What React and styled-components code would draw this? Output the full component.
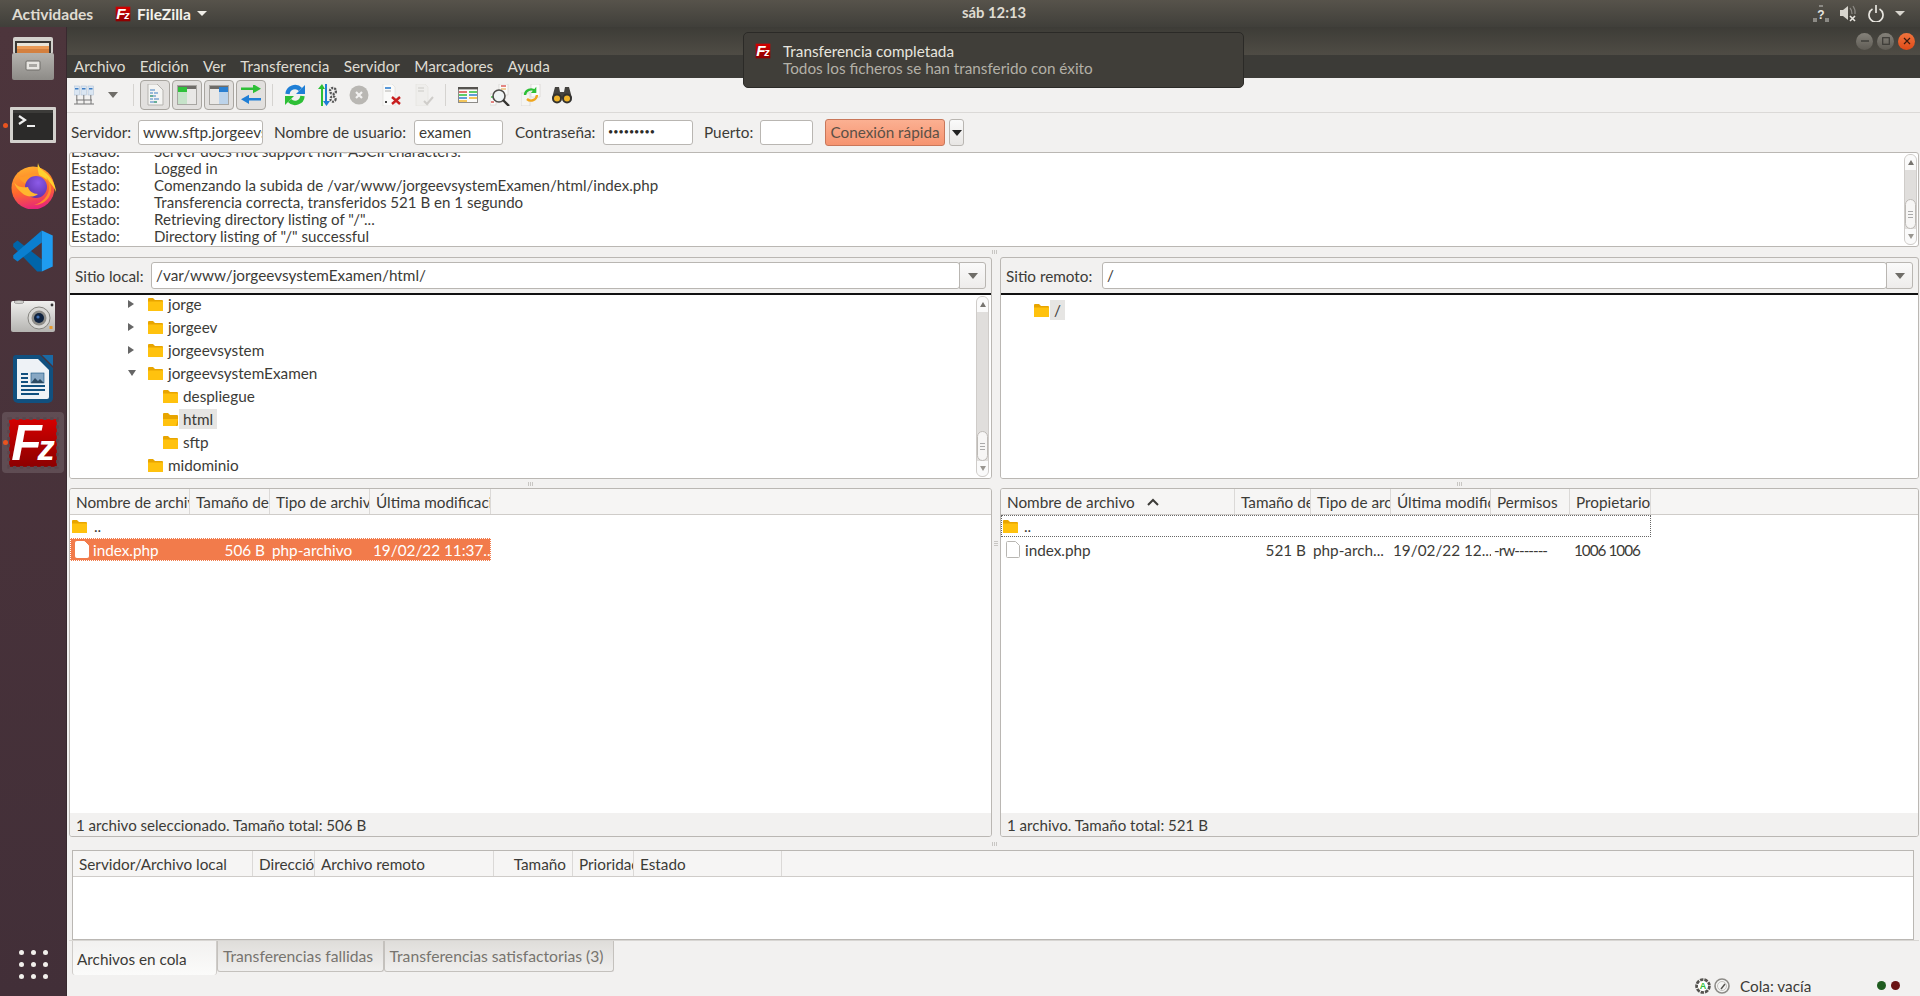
import React from 'react';
import styled, { createGlobalStyle } from 'styled-components';

const GlobalStyle = createGlobalStyle`
  html, body { margin: 0; padding: 0; background: #f2f1f0; overflow: hidden; }
  * { box-sizing: border-box; }
`;

const UI_FONT = `"Lato", "Noto Sans", sans-serif`;

const Screen = styled.div`
  width: 1920px;
  height: 996px;
  display: flex;
  flex-direction: column;
  position: relative;
  overflow: hidden;
  font-family: ${UI_FONT};
  font-size: 15.3px;
  color: #3c3b37;
`;

const TopBar = styled.div`
  height: 27px;
  flex: none;
  display: flex;
  align-items: center;
  padding: 0 15px 0 12px;
  background: linear-gradient(#57534b, #403f3a);
  color: #dfdbd2;
  font-weight: 700;
  font-size: 15.6px;
`;

const Activities = styled.span`
  width: 103px;
`;

const AppMenu = styled.span`
  display: flex;
  align-items: center;
  gap: 6px;
  color: #f4f2ec;
`;

const Caret = styled.span`
  width: 0;
  height: 0;
  border-left: 5px solid transparent;
  border-right: 5px solid transparent;
  border-top: 5px solid ${(p) => p.$color || '#f0eee8'};
  margin-left: ${(p) => p.$left || 0}px;
`;

const Clock = styled.span`
  position: absolute;
  left: 962px;
  top: 3px;
  font-size: 14.8px;
  color: #dfdbd2;
`;

const TrayIcons = styled.div`
  margin-left: auto;
  display: flex;
  align-items: center;
  gap: 11px;
`;

const Main = styled.div`
  flex: 1;
  display: flex;
  min-height: 0;
`;

const Dock = styled.div`
  width: 67px;
  flex: none;
  display: flex;
  flex-direction: column;
  align-items: center;
  background: linear-gradient(#4d353c, #422f38);
  border-right: 1px solid #38292f;
`;

const DockItem = styled.div`
  position: relative;
  width: 62px;
  height: ${(p) => p.$h}px;
  margin-top: ${(p) => p.$top}px;
  flex: none;
  display: flex;
  align-items: center;
  justify-content: center;
  border-radius: 4px;
  background: ${(p) => (p.$active ? 'rgba(255,255,255,0.13)' : 'transparent')};
`;

const RunDot = styled.span`
  position: absolute;
  left: 1px;
  top: 50%;
  margin-top: -2.5px;
  width: 5px;
  height: 5px;
  border-radius: 50%;
  background: #e95420;
`;

const AppsGrid = styled.div`
  margin-top: auto;
  margin-bottom: 17px;
  display: grid;
  grid-template-columns: repeat(3, 5px);
  gap: 7px;
`;

const AppsDot = styled.span`
  width: 5px;
  height: 5px;
  border-radius: 50%;
  background: #f2f0ec;
`;

const Window = styled.div`
  flex: 1;
  min-width: 0;
  display: flex;
  flex-direction: column;
  background: #f2f1f0;
`;

const TitleBar = styled.div`
  height: 28px;
  flex: none;
  display: flex;
  align-items: center;
  justify-content: flex-end;
  gap: 4px;
  padding-right: 5px;
  background: linear-gradient(#3d3c37, #4f4c45);
`;

const WinButton = styled.span`
  width: 17px;
  height: 17px;
  border-radius: 50%;
  display: flex;
  align-items: center;
  justify-content: center;
  background: ${(p) => (p.$close ? 'linear-gradient(#f0743e, #df4a17)' : 'linear-gradient(#85827a, #5e5b54)')};
`;

const MenuBar = styled.div`
  height: 23px;
  flex: none;
  display: flex;
  align-items: center;
  gap: 14.3px;
  padding: 0 0 2px 7px;
  background: #3c3b37;
  color: #dfdbd2;
`;

const Toolbar = styled.div`
  height: 35px;
  flex: none;
  display: flex;
  align-items: center;
  padding-left: 7px;
  border-bottom: 1px solid #dbd9d7;
`;

const ToolSlot = styled.span`
  width: ${(p) => p.$w}px;
  margin-left: ${(p) => p.$left || 0}px;
  flex: none;
  display: flex;
  align-items: center;
  justify-content: center;
`;

const ToolToggle = styled.span`
  width: 30px;
  height: 30px;
  flex: none;
  margin-left: ${(p) => p.$left || 0}px;
  display: flex;
  align-items: center;
  justify-content: center;
  border: 1px solid #a8a5a0;
  border-radius: 4px;
  background: #e2e0de;
`;

const ToolSep = styled.span`
  width: 1px;
  height: 22px;
  flex: none;
  margin-left: ${(p) => p.$left}px;
  background: #d5d3d0;
`;

const QuickBar = styled.div`
  height: 39px;
  flex: none;
  display: flex;
  align-items: center;
  padding-left: 4px;
`;

const QuickLabel = styled.span`
  margin-left: ${(p) => p.$left || 0}px;
  width: ${(p) => p.$w}px;
  padding-bottom: 2px;
  flex: none;
  white-space: nowrap;
`;

const Field = styled.div`
  width: ${(p) => p.$w}px;
  flex: ${(p) => (p.$w ? 'none' : 1)};
  min-width: 0;
  height: ${(p) => p.$h || 25}px;
  padding: 0 4px 2px;
  display: flex;
  align-items: center;
  overflow: hidden;
  white-space: nowrap;
  background: #fff;
  border: 1px solid #b9b6b2;
  border-radius: 3px;
`;

const PasswordDots = styled.span`
  font-size: 9px;
  color: #2c2b28;
`;

const ConnectButton = styled.span`
  width: 120px;
  height: 27px;
  margin-left: 12px;
  padding-bottom: 2px;
  flex: none;
  display: flex;
  align-items: center;
  justify-content: center;
  border: 1px solid #c9775a;
  border-radius: 3px;
  background: linear-gradient(#fbb092, #f69470);
  color: #5c5046;
`;

const ConnectMenu = styled.span`
  width: 15px;
  height: 27px;
  margin-left: 4px;
  flex: none;
  display: flex;
  align-items: center;
  justify-content: center;
  border: 1px solid #b9b6b2;
  border-radius: 3px;
  background: linear-gradient(#fafafa, #e8e6e4);
`;

const Content = styled.div`
  flex: 1;
  min-height: 0;
  display: flex;
  flex-direction: column;
  padding: 0 1px 0 2px;
`;

const LogBox = styled.div`
  height: 95px;
  flex: none;
  position: relative;
  display: flex;
  flex-direction: column;
  justify-content: flex-end;
  overflow: hidden;
  padding: 0 0 2px 1px;
  font-size: 15.1px;
  background: #fff;
  border: 1px solid #bab7b3;
  border-radius: 3px;
`;

const LogLine = styled.div`
  height: 17px;
  flex: none;
  display: flex;
  align-items: center;
  white-space: nowrap;
`;

const LogLabel = styled.span`
  width: 83px;
  flex: none;
`;

const Scroll = styled.div`
  position: absolute;
  top: 1px;
  right: ${(p) => p.$right || 1}px;
  bottom: 1px;
  width: 13px;
  display: flex;
  flex-direction: column;
  align-items: center;
  border: 1px solid #cfccc9;
  border-radius: 6px;
  background: #e0dedc;
  overflow: hidden;
`;

const ScrollCap = styled.span`
  height: 15px;
  width: 100%;
  flex: none;
  display: flex;
  align-items: center;
  justify-content: center;
  background: #fafafa;
`;

const ScrollGap = styled.span`
  flex: ${(p) => p.$grow};
`;

const ScrollThumb = styled.span`
  height: ${(p) => p.$h}px;
  width: 100%;
  flex: none;
  display: flex;
  flex-direction: column;
  align-items: center;
  justify-content: center;
  gap: 2px;
  background: #f7f6f5;
  border: 1px solid #bdbab6;
  border-radius: 6px;
`;

const ThumbLine = styled.span`
  width: 5px;
  height: 1px;
  background: #aaa;
`;

const ArrowMark = styled.span`
  width: 0;
  height: 0;
  border-left: 3.5px solid transparent;
  border-right: 3.5px solid transparent;
  ${(p) => (p.$up ? 'border-bottom: 5px solid #77746f;' : 'border-top: 5px solid #9a9791;')}
`;

const HGrip = styled.div`
  height: ${(p) => p.$h}px;
  flex: none;
  display: flex;
  align-items: center;
  justify-content: center;
  gap: 1px;
`;

const GripLine = styled.span`
  width: 1px;
  height: 4px;
  background: #c8c6c3;
`;

const Panes = styled.div`
  height: 580px;
  flex: none;
  display: grid;
  grid-template-columns: 923px 8px 1fr;
`;

const PaneColumn = styled.div`
  display: flex;
  flex-direction: column;
  min-width: 0;
`;

const VGrip = styled.div`
  display: flex;
  flex-direction: column;
  align-items: center;
  gap: 1px;
  padding-top: 284px;
`;

const VGripLine = styled.span`
  width: 4px;
  height: 1px;
  background: #c8c6c3;
`;

const SitePanel = styled.div`
  height: 222px;
  flex: none;
  position: relative;
  display: flex;
  flex-direction: column;
  border: 1px solid #bab7b3;
  border-radius: 3px;
  overflow: hidden;
`;

const SiteRow = styled.div`
  height: 37px;
  flex: none;
  display: flex;
  align-items: center;
  padding: 0 5px;
  border-bottom: 2px solid #111;
`;

const SiteLabel = styled.span`
  width: ${(p) => p.$w}px;
  flex: none;
  white-space: nowrap;
`;

const ComboArrow = styled.span`
  width: 27px;
  height: 27px;
  flex: none;
  margin-left: -1px;
  display: flex;
  align-items: center;
  justify-content: center;
  border: 1px solid #b9b6b2;
  border-radius: 0 3px 3px 0;
  background: linear-gradient(#fafafa, #eeeceb);
`;

const TreeArea = styled.div`
  flex: 1;
  position: relative;
  background: #fff;
  overflow: hidden;
`;

const TreeList = styled.div`
  margin-top: ${(p) => p.$top}px;
`;

const TreeRow = styled.div`
  height: 23px;
  display: flex;
  align-items: center;
  padding-left: ${(p) => p.$indent}px;
`;

const TreeToggle = styled.span`
  width: 20px;
  flex: none;
  display: flex;
  align-items: center;
`;

const Expander = styled.span`
  width: 0;
  height: 0;
  ${(p) =>
    p.$open
      ? 'border-left: 4.5px solid transparent; border-right: 4.5px solid transparent; border-top: 6px solid #666;'
      : 'border-top: 4.5px solid transparent; border-bottom: 4.5px solid transparent; border-left: 6px solid #666;'}
`;

const TreeName = styled.span`
  margin-left: 1px;
  padding: 1px 4px;
  background: ${(p) => (p.$current ? '#e6e5e3' : 'transparent')};
`;

const ListPanel = styled.div`
  flex: 1;
  min-height: 0;
  display: flex;
  flex-direction: column;
  border: 1px solid #bab7b3;
  border-radius: 3px;
  overflow: hidden;
`;

const HeaderRow = styled.div`
  height: 26px;
  flex: none;
  display: flex;
  background: #f6f5f4;
  border-bottom: 1px solid #cfccc9;
`;

const HeaderCell = styled.div`
  width: ${(p) => p.$w}px;
  flex: none;
  padding: 0 ${(p) => (p.$right ? 6 : 0)}px 0 6px;
  display: flex;
  align-items: center;
  justify-content: ${(p) => (p.$right ? 'flex-end' : 'flex-start')};
  gap: 12px;
  white-space: nowrap;
  overflow: hidden;
  border-right: 1px solid #dbd9d7;
`;

const ListBody = styled.div`
  flex: 1;
  min-height: 0;
  background: #fff;
`;

const FileRow = styled.div`
  height: ${(p) => p.$h || 23}px;
  margin-bottom: ${(p) => (p.$h ? 1 : 0)}px;
  width: ${(p) => p.$w}px;
  display: flex;
  align-items: center;
  white-space: nowrap;
  background: ${(p) => (p.$selected ? '#f27b4b' : 'transparent')};
  color: ${(p) => (p.$selected ? '#fff' : 'inherit')};
  outline: ${(p) => (p.$selected ? '1px dotted #fff' : p.$focus ? '1px dotted #666' : 'none')};
  outline-offset: -1px;
`;

const FileCell = styled.span`
  width: ${(p) => p.$w}px;
  flex: none;
  display: flex;
  align-items: center;
  gap: ${(p) => p.$gap || 0}px;
  padding: 0 ${(p) => (p.$right ? 5 : 0)}px 0 ${(p) => p.$pad || 0}px;
  justify-content: ${(p) => (p.$right ? 'flex-end' : 'flex-start')};
  letter-spacing: ${(p) => (p.$tight ? '-1px' : 'normal')};
  overflow: hidden;
`;

const PanelStatus = styled.div`
  height: 23px;
  flex: none;
  display: flex;
  align-items: center;
  padding-left: 6px;
  font-size: 15.1px;
  background: #f2f1f0;
`;

const QueueBox = styled.div`
  height: 90px;
  flex: none;
  margin: 0 5px 0 3px;
  display: flex;
  flex-direction: column;
  background: #fff;
  border: 1px solid #bab7b3;
`;

const TabStrip = styled.div`
  height: 35px;
  flex: none;
  display: flex;
  align-items: flex-start;
  padding-left: 3px;
  border-top: 1px solid #d8d6d3;
`;

const ActiveTab = styled.div`
  width: 145px;
  height: 34px;
  flex: none;
  display: flex;
  align-items: center;
  padding: 1px 0 0 4px;
  background: linear-gradient(#f2f1f0, #fbfbfa);
  border: 1px solid #cfccc9;
  border-top: none;
  border-bottom: none;
  border-radius: 0 0 3px 3px;
`;

const Tab = styled.div`
  width: ${(p) => p.$w}px;
  height: 31px;
  flex: none;
  display: flex;
  align-items: center;
  justify-content: center;
  padding-right: 5px;
  font-size: 15.7px;
  white-space: nowrap;
  color: #77746f;
  background: linear-gradient(#dfddda, #f0efee);
  border: 1px solid #c4c1bd;
  border-top: none;
  border-radius: 0 0 3px 3px;
`;

const StatusBar = styled.div`
  flex: 1;
  display: flex;
  align-items: center;
  gap: 3px;
  padding-left: 1626px;
  background: #f2f1f0;
`;

const QueueText = styled.span`
  margin-left: 7px;
  width: 134px;
`;

const Led = styled.span`
  width: 9px;
  height: 9px;
  flex: none;
  margin-right: 2px;
  border-radius: 50%;
  background: ${(p) => p.$color};
`;

const Toast = styled.div`
  position: absolute;
  left: 743px;
  top: 32px;
  width: 501px;
  height: 56px;
  display: flex;
  align-items: flex-start;
  gap: 12px;
  padding: 10px 11px;
  background: #403e39;
  border: 1px solid #2b2a27;
  border-radius: 5px;
  line-height: 17px;
`;

const ToastText = styled.div`
  color: #e7e5df;
`;

const ToastSub = styled.div`
  color: #b3b0a7;
`;

// logo: red stamp with the letters kept as text
const FzLogo = ({ size, stamp }) => (
  <svg width={size} height={size} viewBox="0 0 48 48">
    <rect x="2" y="2" width="44" height="44" fill="url(#fzShade)" />
    {stamp && (
      <rect x="1.5" y="1.5" width="45" height="45" fill="none" stroke="#5a454b" strokeWidth="2.4" strokeDasharray="3 3.4" />
    )}
    <defs>
      <linearGradient id="fzShade" x1="0" y1="0" x2="0" y2="1">
        <stop offset="0" stopColor="#d40000" />
        <stop offset="1" stopColor="#8c0000" />
      </linearGradient>
    </defs>
    <text x="24" y="40" textAnchor="middle" fontFamily="Liberation Sans, sans-serif" fontWeight="700" fontStyle="italic" fill="#fff">
      <tspan fontSize="46">F</tspan>
      <tspan fontSize="32" dx="-4">z</tspan>
    </text>
  </svg>
);

const FileCabinet = () => (
  <svg width="42" height="43" viewBox="0 0 42 43">
    <defs>
      <linearGradient id="cab" x1="0" y1="0" x2="0" y2="1">
        <stop offset="0" stopColor="#b5b3af" />
        <stop offset="1" stopColor="#8d8b87" />
      </linearGradient>
    </defs>
    <rect x="1" y="0" width="40" height="17" rx="2" fill="#d2d0cc" />
    <rect x="3" y="4" width="36" height="12" fill="#3a3734" />
    <rect x="5" y="6" width="32" height="3" fill="#e9e4d8" />
    <rect x="5" y="9" width="32" height="3" fill="#ea9a55" />
    <rect x="5" y="12" width="32" height="4" fill="#d4803f" />
    <rect x="0" y="16" width="42" height="27" rx="2" fill="url(#cab)" />
    <rect x="14" y="24" width="14" height="9" rx="1" fill="#e8e6e2" stroke="#6f6d69" />
    <rect x="17" y="27" width="8" height="3" fill="#a9a7a3" />
  </svg>
);

const TerminalIcon = () => (
  <svg width="46" height="36" viewBox="0 0 46 36">
    <rect width="46" height="36" rx="1" fill="#d3d1cd" />
    <rect x="3" y="3" width="40" height="30" fill="#2b2a29" />
    <rect x="3" y="3" width="40" height="3" fill="#3c3b39" />
    <path d="M9 9l6 4-6 4" fill="none" stroke="#eee" strokeWidth="2.2" />
    <rect x="17" y="18" width="8" height="2" fill="#eee" />
  </svg>
);

const FirefoxIcon = () => (
  <svg width="46" height="46" viewBox="0 0 46 46">
    <defs>
      <linearGradient id="ffBody" x1="0.3" y1="0" x2="0.5" y2="1">
        <stop offset="0" stopColor="#ffb02e" />
        <stop offset="0.55" stopColor="#ff6a2c" />
        <stop offset="1" stopColor="#e5227d" />
      </linearGradient>
      <radialGradient id="ffGlobe" cx="0.6" cy="0.3" r="0.8">
        <stop offset="0" stopColor="#8c5be8" />
        <stop offset="1" stopColor="#5a2ea6" />
      </radialGradient>
    </defs>
    <circle cx="23" cy="25" r="21.5" fill="url(#ffBody)" />
    <path d="M28 0c1 6 6 8 10 12 5 5 8 12 8 17-3-8-10-14-17-17-1-4-2-8-1-12z" fill="#ffd12e" />
    <path d="M7 9c1 3 3 5 6 5 4-3 9-4 14-3-3 3-7 7-8 11-5-1-11-6-12-13z" fill="#ff9a28" />
    <circle cx="26" cy="24" r="11" fill="url(#ffGlobe)" />
    <path d="M4 19c3 5 9 6 14 5 1 4 5 7 10 7-5 4-12 3-16-1-4-3-7-7-8-11z" fill="#ffb62e" />
    <path d="M36 14c5 5 7 13 3 20-3 5-9 8-15 8 8-2 15-9 15-17 0-4-1-8-3-11z" fill="#ff8d2c" />
  </svg>
);

const VsCodeIcon = () => (
  <svg width="42" height="42" viewBox="0 0 100 100">
    <polygon points="71,99 71,70 13,25 3,33 3,40 60,99" fill="#0065a9" />
    <polygon points="71,1 71,30 13,75 3,67 3,60" fill="#0a7fd0" />
    <polygon points="71,1 97,13 97,87 71,99" fill="#1f9cf0" />
  </svg>
);

const CameraIcon = () => (
  <svg width="44" height="32" viewBox="0 0 44 32">
    <defs>
      <linearGradient id="camBody" x1="0" y1="0" x2="0" y2="1">
        <stop offset="0" stopColor="#efefed" />
        <stop offset="1" stopColor="#b5b4b1" />
      </linearGradient>
    </defs>
    <rect y="1" width="44" height="31" rx="2" fill="url(#camBody)" />
    <ellipse cx="8" cy="2" rx="5" ry="1.6" fill="#d5d4d1" stroke="#777" strokeWidth="0.6" />
    <circle cx="28" cy="18" r="11" fill="#d9d8d5" stroke="#85847f" />
    <circle cx="28" cy="18" r="7.5" fill="#8e8d89" />
    <circle cx="28" cy="18" r="5" fill="#10233f" />
    <circle cx="27" cy="17" r="1.6" fill="#3f6fb2" />
    <circle cx="41" cy="5" r="1.4" fill="#333" />
    <rect x="38.5" y="26" width="3" height="3" fill="#e89a2c" />
  </svg>
);

const WriterIcon = () => (
  <svg width="40" height="48" viewBox="0 0 40 48">
    <path d="M3 0h24l13 13v30a5 5 0 0 1-5 5H5a5 5 0 0 1-5-5V3a3 3 0 0 1 3-3z" fill="#11507f" />
    <path d="M29 0h11v11z" fill="#1a6aa5" />
    <path d="M4 4h21l11 11v27a2 2 0 0 1-2 2H4z" fill="#eef2f6" />
    <rect x="8" y="18" width="7" height="2" fill="#11507f" />
    <rect x="8" y="22" width="7" height="2" fill="#11507f" />
    <rect x="8" y="26" width="7" height="2" fill="#11507f" />
    <rect x="18" y="18" width="13" height="10" fill="#88a8c4" stroke="#11507f" strokeWidth="0.6" />
    <path d="M18 28l4-5 3 3 2-2 4 4z" fill="#2b4a63" />
    <rect x="8" y="30" width="24" height="2" fill="#11507f" />
    <rect x="8" y="34" width="24" height="2" fill="#11507f" />
    <rect x="8" y="38" width="18" height="2" fill="#11507f" />
  </svg>
);

const Folder = ({ open }) => (
  <svg width="15" height="14" viewBox="0 0 15 14" style={{ flex: 'none' }}>
    <path d="M0 2a1 1 0 0 1 1-1h4l2 2h7a1 1 0 0 1 1 1v9a1 1 0 0 1-1 1H1a1 1 0 0 1-1-1z" fill="#e8a500" />
    <path d={open ? 'M0 7h15l-2 7H0z' : 'M0 4.5h15V13a1 1 0 0 1-1 1H1a1 1 0 0 1-1-1z'} fill="#ffc20e" />
  </svg>
);

const FileIcon = ({ outline }) => (
  <svg width="14" height="17" viewBox="0 0 14 17" style={{ flex: 'none' }}>
    <path d="M1.5.5h8l4 4v11a1 1 0 0 1-1 1h-11a1 1 0 0 1-1-1v-14a1 1 0 0 1 1-1z" fill="#fff" stroke={outline ? '#b8b6b2' : '#fff'} />
  </svg>
);

const SiteManagerIcon = () => (
  <svg width="20" height="20" viewBox="0 0 20 20">
    {[0, 7, 14].map((x) => (
      <g key={x}>
        <rect x={x} y="1" width="5.5" height="9" fill="#dbe6f2" stroke="#a9bdd2" strokeWidth="0.5" />
        <rect x={x + 1} y="3" width="3.5" height="1.5" fill="#3f7ec4" />
        <path d={`M${x + 2.8} 10v5`} stroke="#777" strokeWidth="1" />
      </g>
    ))}
    <path d="M2 15h16M0 19h20M3 15v4M10 15v4M17 15v4" stroke="#777" strokeWidth="1" fill="none" />
  </svg>
);

const DownArrow = ({ color = '#6f6d68' }) => (
  <svg width="10" height="6" viewBox="0 0 10 6">
    <path d="M0 0h10L5 6z" fill={color} />
  </svg>
);

const LogToggleIcon = () => (
  <svg width="18" height="22" viewBox="0 0 18 22">
    <path d="M2 0h9l6 6v15H2z" fill="#f4f4f2" stroke="#b5b3af" />
    <path d="M4 6h5M4 9h3M8 9h4M4 12h6M4 15h3M8 15h5M4 18h7" stroke="#3e7fc2" strokeWidth="1.2" />
    <path d="M4 12h3M8 18h3" stroke="#3aa655" strokeWidth="1.2" />
  </svg>
);

const PaneToggleIcon = ({ side }) => {
  const left = side === 'left';
  return (
    <svg width="20" height="20" viewBox="0 0 20 20">
      <rect x="0.5" y="0.5" width="19" height="19" fill="#e9e8e6" stroke="#a8a6a2" />
      <rect x="1" y="1" width="18" height="3" fill="#6e6c68" />
      <rect x={left ? 1 : 10} y="2" width="9" height="5" fill={left ? '#2fc13b' : '#2a7fd0'} />
      <rect x={left ? 1 : 10} y="7" width="9" height="12" fill={left ? '#c6e3c9' : '#bcd3ea'} />
    </svg>
  );
};

const QueueToggleIcon = () => (
  <svg width="20" height="20" viewBox="0 0 20 20">
    <path d="M0 4h12V0l8 5.5-8 5.5V7H0z" fill="#2dbf36" transform="translate(0 -1) scale(1 .85)" />
    <path d="M20 13H8V9L0 14.5 8 20v-4h12z" fill="#1f7fd6" transform="translate(0 2) scale(1 .85)" />
  </svg>
);

const RefreshIcon = () => (
  <svg width="22" height="22" viewBox="0 0 22 22">
    <path d="M3.5 10a7.5 7.5 0 0 1 13-4.5" fill="none" stroke="#1f7fd6" strokeWidth="4.4" />
    <path d="M21 1v9h-9z" fill="#1f7fd6" />
    <path d="M18.5 12a7.5 7.5 0 0 1-13 4.5" fill="none" stroke="#2dbf36" strokeWidth="4.4" />
    <path d="M1 21v-9h9z" fill="#2dbf36" />
  </svg>
);

const ProcessIcon = () => (
  <svg width="20" height="22" viewBox="0 0 20 22">
    <path d="M4 22V5H1l4-5 3 5H6v17z" fill="#2dbf36" />
    <path d="M8 0v17H6l3.5 5 3.5-5h-3V0z" fill="#1f7fd6" />
    <circle cx="16" cy="7" r="3" fill="none" stroke="#555" strokeWidth="2.4" strokeDasharray="2 1" />
    <circle cx="16" cy="15" r="2.6" fill="none" stroke="#555" strokeWidth="2.2" strokeDasharray="2 1" />
  </svg>
);

const CancelIcon = () => (
  <svg width="20" height="20" viewBox="0 0 20 20">
    <circle cx="10" cy="10" r="9.5" fill="#b9b7b3" />
    <path d="M7 7l6 6M13 7l-6 6" stroke="#f2f1f0" strokeWidth="2.2" />
  </svg>
);

const DisconnectIcon = () => (
  <svg width="20" height="22" viewBox="0 0 20 22">
    <path d="M1 0h9l3 3v19H1z" fill="#fafaf9" stroke="#d6d4d1" strokeWidth="0.5" />
    <path d="M3 4h6" stroke="#2f7fd0" strokeWidth="1.6" />
    <path d="M3 7h6" stroke="#b4b2ae" strokeWidth="1" />
    <rect x="3" y="17" width="2" height="2" fill="#444" />
    <path d="M10 13l8 7M18 13l-8 7" stroke="#c81e1e" strokeWidth="2.4" />
  </svg>
);

const ReconnectIcon = () => (
  <svg width="19" height="22" viewBox="0 0 19 22">
    <path d="M1 0h9l3 3v19H1z" fill="#efeeec" stroke="#dedcd9" strokeWidth="0.5" />
    <path d="M3 4h6M3 7h6" stroke="#cbc9c6" strokeWidth="1.2" />
    <path d="M9 17l3 3 6-7" fill="none" stroke="#cfcdca" strokeWidth="2" />
  </svg>
);

const FilterIcon = () => (
  <svg width="20" height="16" viewBox="0 0 20 16">
    <rect x="0.5" y="0.5" width="19" height="15" fill="#fafaf9" stroke="#8d8b87" />
    <rect x="0" y="0" width="20" height="2.4" fill="#55534f" />
    <path d="M1 5h8" stroke="#d9534f" strokeWidth="1.6" />
    <path d="M11 5h8M1 8h8" stroke="#2dbf36" strokeWidth="1.6" />
    <path d="M11 8h8M1 11h8" stroke="#2f7fd0" strokeWidth="1.6" />
    <path d="M11 11h8M1 14h8" stroke="#f0b429" strokeWidth="1.6" />
  </svg>
);

const SearchDocIcon = () => (
  <svg width="20" height="22" viewBox="0 0 20 22">
    <path d="M9 0h9v11H9z" fill="#fbfbfa" stroke="#cfcdca" strokeWidth="0.6" />
    <path d="M11 2h5" stroke="#d9534f" strokeWidth="1.4" />
    <path d="M11 5h5" stroke="#e2a13a" strokeWidth="1" />
    <rect x="0" y="10" width="6" height="11" fill="#fbfbfa" stroke="#cfcdca" strokeWidth="0.6" />
    <path d="M1 13h3" stroke="#2dbf36" strokeWidth="1.4" />
    <path d="M1 18h3" stroke="#d9534f" strokeWidth="1.4" />
    <circle cx="9" cy="12" r="6" fill="#eef3f4" fillOpacity="0.9" stroke="#4d4b48" strokeWidth="1.6" />
    <path d="M13 16l6 6" stroke="#33322f" strokeWidth="2.4" />
  </svg>
);

const SyncDocIcon = () => (
  <svg width="20" height="22" viewBox="0 0 20 22">
    <path d="M10 0h9v13h-9z" fill="#fbfbfa" stroke="#d0ceca" strokeWidth="0.6" />
    <path d="M0 9h9v13H0z" fill="#f4f4f2" stroke="#d0ceca" strokeWidth="0.6" />
    <path d="M4 11a6 6 0 0 1 10-4" fill="none" stroke="#2dbf36" strokeWidth="2.4" />
    <path d="M16 2v7h-6z" fill="#2dbf36" transform="scale(.9) translate(1 1)" />
    <path d="M16 11a6 6 0 0 1-10 4" fill="none" stroke="#f0a61d" strokeWidth="2.4" />
  </svg>
);

const BinocularsIcon = () => (
  <svg width="20" height="18" viewBox="0 0 20 18">
    <path d="M3 1h4l1 5h4l1-5h4l3 11H0z" fill="#45433f" />
    <circle cx="5" cy="12.5" r="5" fill="#33322f" />
    <circle cx="15" cy="12.5" r="5" fill="#33322f" />
    <circle cx="5" cy="12.5" r="3" fill="#f0b429" />
    <circle cx="15" cy="12.5" r="3" fill="#f0b429" />
  </svg>
);

const NetworkTray = () => (
  <svg width="16" height="17" viewBox="0 0 16 17">
    <rect x="0" y="13" width="4" height="4" fill="#8c8a85" />
    <rect x="12" y="13" width="4" height="4" fill="#8c8a85" />
    <rect x="6" y="0" width="4" height="2" fill="#8c8a85" />
    <text x="8" y="14" textAnchor="middle" fontSize="12" fontWeight="700" fontFamily="Liberation Sans, sans-serif" fill="#e8e6e0">?</text>
  </svg>
);

const VolumeTray = () => (
  <svg width="17" height="17" viewBox="0 0 17 17">
    <path d="M0 5h3l5-4v14l-5-4H0z" fill="#d8d5ce" />
    <path d="M10 3a8 8 0 0 1 2 6M13 1a11 11 0 0 1 2 8" fill="none" stroke="#8c8a85" strokeWidth="1.2" />
    <path d="M10 11l5 5M15 11l-5 5" stroke="#e8e6e0" strokeWidth="1.6" />
  </svg>
);

const PowerTray = () => (
  <svg width="16" height="17" viewBox="0 0 16 17">
    <path d="M4.5 4a7 7 0 1 0 7 0" fill="none" stroke="#e8e6e0" strokeWidth="1.7" />
    <path d="M8 0v8" stroke="#e8e6e0" strokeWidth="1.7" />
  </svg>
);

const GearIcon = () => (
  <svg width="16" height="16" viewBox="0 0 16 16">
    <circle cx="8" cy="8" r="6.4" fill="#fff" stroke="#55534f" strokeWidth="2.8" strokeDasharray="3.4 1" />
    <circle cx="8" cy="8" r="4.6" fill="#fff" />
    <text x="8" y="11" textAnchor="middle" fontSize="9" fontWeight="700" fontFamily="Liberation Sans, sans-serif" fill="#2dbf36">A</text>
  </svg>
);

const GaugeIcon = () => (
  <svg width="16" height="16" viewBox="0 0 16 16">
    <circle cx="8" cy="8" r="7" fill="#f5f5f4" stroke="#8d8b87" strokeWidth="1.6" />
    <circle cx="8" cy="8" r="4.5" fill="none" stroke="#c4c2bf" />
    <path d="M7 11l4-5" stroke="#55534f" strokeWidth="1.5" />
  </svg>
);

const logLines = [
  'Server does not support non-ASCII characters.',
  'Logged in',
  'Comenzando la subida de /var/www/jorgeevsystemExamen/html/index.php',
  'Transferencia correcta, transferidos 521 B en 1 segundo',
  'Retrieving directory listing of "/"...',
  'Directory listing of "/" successful',
];

const treeItems = [
  { name: 'jorge', indent: 58, toggle: 'closed' },
  { name: 'jorgeev', indent: 58, toggle: 'closed' },
  { name: 'jorgeevsystem', indent: 58, toggle: 'closed' },
  { name: 'jorgeevsystemExamen', indent: 58, toggle: 'open' },
  { name: 'despliegue', indent: 93 },
  { name: 'html', indent: 93, current: true },
  { name: 'sftp', indent: 93 },
  { name: 'midominio', indent: 78 },
];

const localCols = [
  ['Nombre de archivo', 120],
  ['Tamaño de archivo', 80],
  ['Tipo de archivo', 100],
  ['Última modificación', 121],
];

const remoteCols = [
  ['Tamaño de archivo', 76],
  ['Tipo de archivo', 80],
  ['Última modificación', 100],
  ['Permisos', 79],
  ['Propietario/Grupo', 81],
];

const queueCols = [
  ['Servidor/Archivo local', 180],
  ['Dirección', 62],
  ['Archivo remoto', 179],
  ['Tamaño', 79, true],
  ['Prioridad', 61],
  ['Estado', 148],
];

const Grip = ({ h }) => (
  <HGrip $h={h}>
    <GripLine />
    <GripLine />
    <GripLine />
  </HGrip>
);

const ScrollBar = ({ before, after, thumb, right }) => (
  <Scroll $right={right}>
    <ScrollCap>
      <ArrowMark $up />
    </ScrollCap>
    <ScrollGap $grow={before} />
    <ScrollThumb $h={thumb}>
      <ThumbLine />
      <ThumbLine />
      <ThumbLine />
    </ScrollThumb>
    <ScrollGap $grow={after} />
    <ScrollCap>
      <ArrowMark />
    </ScrollCap>
  </Scroll>
);

const App = () => (
  <Screen>
    <GlobalStyle />
    <TopBar>
      <Activities>Actividades</Activities>
      <AppMenu>
        <FzLogo size={16} />
        FileZilla
        <Caret />
      </AppMenu>
      <Clock>sáb 12:13</Clock>
      <TrayIcons>
        <NetworkTray />
        <VolumeTray />
        <PowerTray />
        <Caret $color="#d8d5ce" />
      </TrayIcons>
    </TopBar>
    <Main>
      <Dock>
        <DockItem $h={43} $top={10}><FileCabinet /></DockItem>
        <DockItem $h={36} $top={27}><RunDot /><TerminalIcon /></DockItem>
        <DockItem $h={46} $top={20}><FirefoxIcon /></DockItem>
        <DockItem $h={42} $top={21}><VsCodeIcon /></DockItem>
        <DockItem $h={32} $top={28}><CameraIcon /></DockItem>
        <DockItem $h={48} $top={23}><WriterIcon /></DockItem>
        <DockItem $h={61} $top={9} $active><RunDot /><FzLogo size={52} stamp /></DockItem>
        <AppsGrid>
          {Array.from({ length: 9 }, (_, i) => <AppsDot key={i} />)}
        </AppsGrid>
      </Dock>
      <Window>
        <TitleBar>
          <WinButton>
            <svg width="8" height="8" viewBox="0 0 8 8"><path d="M0 4h8" stroke="#3c3b37" strokeWidth="1.4" /></svg>
          </WinButton>
          <WinButton>
            <svg width="8" height="8" viewBox="0 0 8 8"><rect x="0.7" y="0.7" width="6.6" height="6.6" fill="none" stroke="#3c3b37" strokeWidth="1.2" /></svg>
          </WinButton>
          <WinButton $close>
            <svg width="8" height="8" viewBox="0 0 8 8"><path d="M1 1l6 6M7 1L1 7" stroke="#3c1a0d" strokeWidth="1.2" /></svg>
          </WinButton>
        </TitleBar>
        <MenuBar>
          {['Archivo', 'Edición', 'Ver', 'Transferencia', 'Servidor', 'Marcadores', 'Ayuda'].map((m) => (
            <span key={m}>{m}</span>
          ))}
        </MenuBar>
        <Toolbar>
          <ToolSlot $w={20}><SiteManagerIcon /></ToolSlot>
          <ToolSlot $w={10} $left={14}><DownArrow /></ToolSlot>
          <ToolSep $left={15} />
          <ToolToggle $left={6}><LogToggleIcon /></ToolToggle>
          <ToolToggle $left={2}><PaneToggleIcon side="left" /></ToolToggle>
          <ToolToggle $left={2}><PaneToggleIcon side="right" /></ToolToggle>
          <ToolToggle $left={2}><QueueToggleIcon /></ToolToggle>
          <ToolSep $left={6} />
          <ToolSlot $w={22} $left={11}><RefreshIcon /></ToolSlot>
          <ToolSlot $w={20} $left={11}><ProcessIcon /></ToolSlot>
          <ToolSlot $w={20} $left={12}><CancelIcon /></ToolSlot>
          <ToolSlot $w={20} $left={13}><DisconnectIcon /></ToolSlot>
          <ToolSlot $w={19} $left={13}><ReconnectIcon /></ToolSlot>
          <ToolSep $left={11} />
          <ToolSlot $w={20} $left={12}><FilterIcon /></ToolSlot>
          <ToolSlot $w={20} $left={12}><SearchDocIcon /></ToolSlot>
          <ToolSlot $w={20} $left={11}><SyncDocIcon /></ToolSlot>
          <ToolSlot $w={20} $left={11}><BinocularsIcon /></ToolSlot>
        </Toolbar>
        <QuickBar>
          <QuickLabel $w={67}>Servidor:</QuickLabel>
          <Field $w={125}>www.sftp.jorgeevsystem.com</Field>
          <QuickLabel $w={140} $left={11}>Nombre de usuario:</QuickLabel>
          <Field $w={89}>examen</Field>
          <QuickLabel $w={88} $left={12}>Contraseña:</QuickLabel>
          <Field $w={90}><PasswordDots>•••••••••</PasswordDots></Field>
          <QuickLabel $w={56} $left={11}>Puerto:</QuickLabel>
          <Field $w={53} />
          <ConnectButton>Conexión rápida</ConnectButton>
          <ConnectMenu><DownArrow color="#222" /></ConnectMenu>
        </QuickBar>
        <Content>
          <LogBox>
            {logLines.map((line) => (
              <LogLine key={line}>
                <LogLabel>Estado:</LogLabel>
                {line}
              </LogLine>
            ))}
            <ScrollBar before={1} after={0} thumb={30} />
          </LogBox>
          <Grip h={10} />
          <Panes>
            <PaneColumn>
              <SitePanel>
                <SiteRow>
                  <SiteLabel $w={76}>Sitio local:</SiteLabel>
                  <Field $h={27}>/var/www/jorgeevsystemExamen/html/</Field>
                  <ComboArrow><DownArrow /></ComboArrow>
                </SiteRow>
                <TreeArea>
                  <TreeList $top={-3}>
                    {treeItems.map((item) => (
                      <TreeRow key={item.name} $indent={item.indent}>
                        {item.toggle && (
                          <TreeToggle>
                            <Expander $open={item.toggle === 'open'} />
                          </TreeToggle>
                        )}
                        <Folder open={item.current} />
                        <TreeName $current={item.current}>{item.name}</TreeName>
                      </TreeRow>
                    ))}
                  </TreeList>
                  <ScrollBar before={1} after={0} thumb={30} right={2} />
                </TreeArea>
              </SitePanel>
              <Grip h={9} />
              <ListPanel>
                <HeaderRow>
                  {localCols.map(([label, w]) => (
                    <HeaderCell key={label} $w={w}>{label}</HeaderCell>
                  ))}
                </HeaderRow>
                <ListBody>
                  <FileRow $w={421} $h={22}>
                    <FileCell $w={120} $gap={7} $pad={2}>
                      <Folder />
                      ..
                    </FileCell>
                  </FileRow>
                  <FileRow $w={421} $selected>
                    <FileCell $w={120} $gap={4} $pad={5}>
                      <FileIcon />
                      index.php
                    </FileCell>
                    <FileCell $w={80} $right>506 B</FileCell>
                    <FileCell $w={100} $pad={2}>php-archivo</FileCell>
                    <FileCell $w={121} $pad={3}>19/02/22 11:37...</FileCell>
                  </FileRow>
                </ListBody>
                <PanelStatus>1 archivo seleccionado. Tamaño total: 506 B</PanelStatus>
              </ListPanel>
            </PaneColumn>
            <VGrip>
              <VGripLine />
              <VGripLine />
              <VGripLine />
            </VGrip>
            <PaneColumn>
              <SitePanel>
                <SiteRow>
                  <SiteLabel $w={96}>Sitio remoto:</SiteLabel>
                  <Field $h={27}>/</Field>
                  <ComboArrow><DownArrow /></ComboArrow>
                </SiteRow>
                <TreeArea>
                  <TreeList $top={3}>
                    <TreeRow $indent={33}>
                      <Folder />
                      <TreeName $current>/</TreeName>
                    </TreeRow>
                  </TreeList>
                </TreeArea>
              </SitePanel>
              <Grip h={9} />
              <ListPanel>
                <HeaderRow>
                  <HeaderCell $w={234}>
                    Nombre de archivo
                    <svg width="12" height="8" viewBox="0 0 12 8"><path d="M1 7l5-5 5 5" fill="none" stroke="#3c3b37" strokeWidth="2" /></svg>
                  </HeaderCell>
                  {remoteCols.map(([label, w]) => (
                    <HeaderCell key={label} $w={w}>{label}</HeaderCell>
                  ))}
                </HeaderRow>
                <ListBody>
                  <FileRow $w={650} $h={22} $focus>
                    <FileCell $w={234} $gap={6} $pad={2}>
                      <Folder />
                      ..
                    </FileCell>
                  </FileRow>
                  <FileRow $w={650}>
                    <FileCell $w={234} $gap={5} $pad={5}>
                      <FileIcon outline />
                      index.php
                    </FileCell>
                    <FileCell $w={76} $right>521 B</FileCell>
                    <FileCell $w={80} $pad={2}>php-arch...</FileCell>
                    <FileCell $w={100} $pad={2}>19/02/22 12...</FileCell>
                    <FileCell $w={79} $pad={3} $tight>-rw-------</FileCell>
                    <FileCell $w={81} $pad={4} $tight>1006 1006</FileCell>
                  </FileRow>
                </ListBody>
                <PanelStatus>1 archivo. Tamaño total: 521 B</PanelStatus>
              </ListPanel>
            </PaneColumn>
          </Panes>
          <Grip h={13} />
          <QueueBox>
            <HeaderRow>
              {queueCols.map(([label, w, right]) => (
                <HeaderCell key={label} $w={w} $right={right}>{label}</HeaderCell>
              ))}
            </HeaderRow>
          </QueueBox>
          <TabStrip>
            <ActiveTab>Archivos en cola</ActiveTab>
            <Tab $w={167}>Transferencias fallidas</Tab>
            <Tab $w={230}>Transferencias satisfactorias (3)</Tab>
          </TabStrip>
          <StatusBar>
            <GearIcon />
            <GaugeIcon />
            <QueueText>Cola: vacía</QueueText>
            <Led $color="#1f5c1f" />
            <Led $color="#6a1414" />
          </StatusBar>
        </Content>
      </Window>
    </Main>
    <Toast>
      <FzLogo size={16} />
      <div>
        <ToastText>Transferencia completada</ToastText>
        <ToastSub>Todos los ficheros se han transferido con éxito</ToastSub>
      </div>
    </Toast>
  </Screen>
);

export default App;
